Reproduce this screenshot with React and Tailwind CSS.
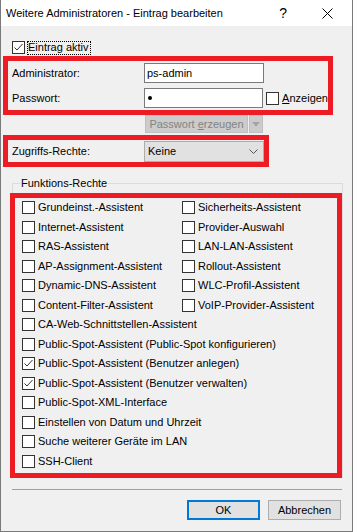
import React from 'react';

const RED = 'border-[5px] border-[#ed1c24]';

function Box({ checked }) {
  return (
    <span className="w-[13px] h-[13px] shrink-0 border border-[#333333] bg-white flex items-center justify-center">
      {checked && (
        <svg width="11" height="11" viewBox="0 0 11 11">
          <path d="M1.5 5.5 L4 8 L9.5 2" stroke="#333333" strokeWidth="1" fill="none" />
        </svg>
      )}
    </span>
  );
}

function Check({ label, checked }) {
  return (
    <div className="h-[19.5px] flex items-center gap-[3px] whitespace-nowrap">
      <Box checked={checked} />
      <span>{label}</span>
    </div>
  );
}

const pairs = [
  ['Grundeinst.-Assistent', 'Sicherheits-Assistent'],
  ['Internet-Assistent', 'Provider-Auswahl'],
  ['RAS-Assistent', 'LAN-LAN-Assistent'],
  ['AP-Assignment-Assistent', 'Rollout-Assistent'],
  ['Dynamic-DNS-Assistent', 'WLC-Profil-Assistent'],
  ['Content-Filter-Assistent', 'VoIP-Provider-Assistent'],
];

const singles = [
  ['CA-Web-Schnittstellen-Assistent', false],
  ['Public-Spot-Assistent (Public-Spot konfigurieren)', false],
  ['Public-Spot-Assistent (Benutzer anlegen)', true],
  ['Public-Spot-Assistent (Benutzer verwalten)', true],
  ['Public-Spot-XML-Interface', false],
  ['Einstellen von Datum und Uhrzeit', false],
  ['Suche weiterer Geräte im LAN', false],
  ['SSH-Client', false],
];

export default function App() {
  return (
    <div className="w-[353px] h-[532px] flex flex-col border-l border-r border-b border-[#7a7a7a] bg-[#f0f0f0] font-['Liberation_Sans',Arial,sans-serif] text-[11px] text-black leading-none">
      {/* title bar */}
      <div className="h-[26px] shrink-0 bg-white flex items-center">
        <span className="ml-[5px]">Weitere Administratoren - Eintrag bearbeiten</span>
        <span className="ml-auto mr-[35px] text-[14px]">?</span>
        <svg width="11" height="11" viewBox="0 0 11 11" className="mr-[19px]">
          <path d="M0.5 0.5 L10.5 10.5 M10.5 0.5 L0.5 10.5" stroke="#000" strokeWidth="1" />
        </svg>
      </div>

      <div className="flex flex-col flex-1">
        {/* Eintrag aktiv */}
        <div className="mt-[15px] ml-[11px] h-[13px] flex items-center gap-[2px]">
          <Box checked />
          <span className="h-[14px] flex items-center border border-dotted border-black pr-[1px]">Eintrag aktiv</span>
        </div>

        {/* admin + password */}
        <div className={`mt-[2px] ml-[2px] w-[330px] h-[59px] ${RED} flex flex-col pt-[2px] gap-[5px]`}>
          <div className="h-[20px] flex items-center">
            <span className="w-[136px] pl-[4px]">Administrator:</span>
            <div className="w-[120px] h-[20px] border border-[#7a7a7a] bg-white flex items-center pl-[2px]">ps-admin</div>
          </div>
          <div className="h-[20px] flex items-center">
            <span className="w-[136px] pl-[4px]">Passwort:</span>
            <div className="w-[120px] h-[20px] border border-[#7a7a7a] bg-white flex items-center pl-[3px]">
              <span className="w-[4px] h-[4px] rounded-full bg-black" />
            </div>
            <span className="ml-[3px]"><Box /></span>
            <span className="ml-[3px]"><span className="underline">A</span>nzeigen</span>
          </div>
        </div>

        {/* Passwort erzeugen split button */}
        <div className="ml-[144px] h-[18px] flex">
          <div className="w-[103px] bg-[#cccccc] border border-[#bfbfbf] text-[#838383] flex items-center justify-center">
            Passwort&nbsp;<span className="underline">e</span>rzeugen
          </div>
          <div className="ml-[1px] w-[14px] bg-[#cccccc] border border-[#bfbfbf] flex items-center justify-center">
            <svg width="8" height="5" viewBox="0 0 8 5">
              <path d="M0 0 L8 0 L4 4.5 Z" fill="#a3a3a3" />
            </svg>
          </div>
        </div>

        {/* Zugriffs-Rechte */}
        <div className={`mt-[2px] ml-[2px] w-[266px] h-[32px] ${RED} flex items-start pt-[1px]`}>
          <span className="w-[136px] pl-[4px] leading-[21px]">Zugriffs-Rechte:</span>
          <div className="w-[120px] h-[21px] bg-[#e1e1e1] border border-[#adadad] flex items-center justify-between pl-[3px] pr-[5px]">
            <span>Keine</span>
            <svg width="9" height="5" viewBox="0 0 9 5">
              <path d="M0.5 0.5 L4.5 4.5 L8.5 0.5" stroke="#555" strokeWidth="1" fill="none" />
            </svg>
          </div>
        </div>

        {/* Funktions-Rechte group */}
        <fieldset className="mt-[9px] ml-[11px] w-[330px] border border-[#dcdcdc]">
          <legend className="ml-[7px] px-[1px] leading-[14px]">Funktions-Rechte</legend>
          <div className={`mt-[3px] ml-[-3px] mb-[-1px] w-[332px] h-[285px] ${RED} pl-[7px]`}>
            <div className="grid grid-cols-[160px_1fr]">
              {pairs.map(([a, b]) => (
                <React.Fragment key={a}>
                  <Check label={a} />
                  <Check label={b} />
                </React.Fragment>
              ))}
            </div>
            {singles.map(([l, c]) => (
              <Check key={l} label={l} checked={c} />
            ))}
          </div>
        </fieldset>

        <div className="mt-[11px] ml-[11px] w-[330px] h-px bg-[#a0a0a0]" />

        <div className="mt-[10px] flex justify-end gap-[8px] pr-[11px]">
          <div className="w-[73px] h-[20px] bg-[#e1e1e1] border-2 border-[#0078d7] flex items-center justify-center">OK</div>
          <div className="w-[73px] h-[20px] bg-[#e1e1e1] border border-[#adadad] flex items-center justify-center">Abbrechen</div>
        </div>
      </div>
    </div>
  );
}
